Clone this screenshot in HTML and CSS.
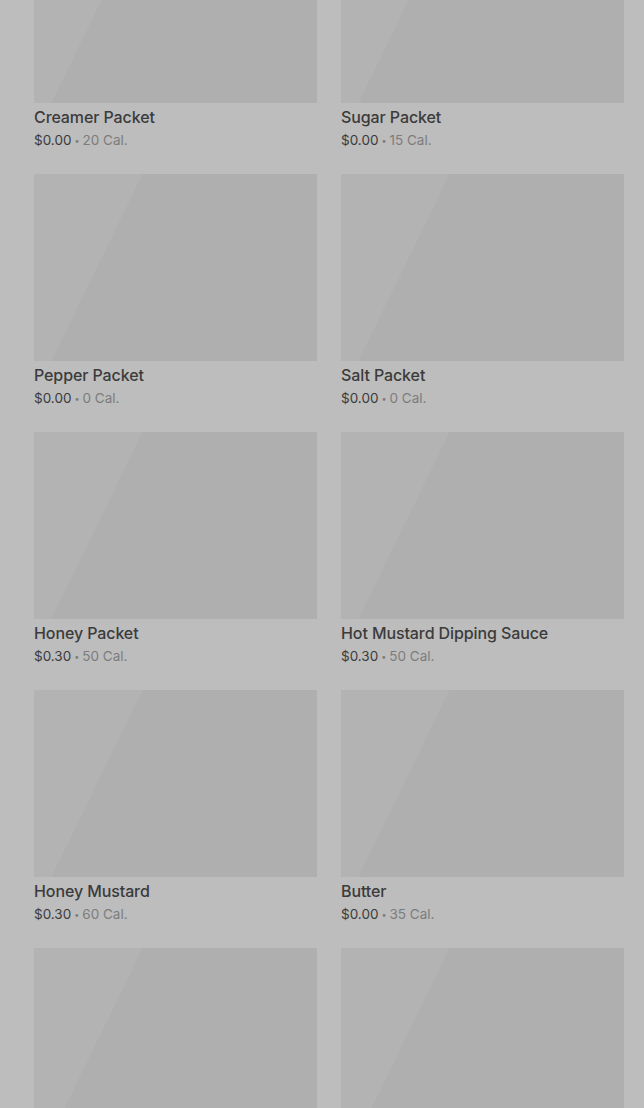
FILE: index.html
```html
<!DOCTYPE html>
<html lang="en">
<head>
  <meta charset="UTF-8" />
  <title>Extras</title>
  <link rel="stylesheet" href="styles.css">
</head>
<body>
  <div class="menu-grid">
    <div class="item">
      <div class="thumb"></div>
      <div class="name">Creamer Packet</div>
      <div class="meta"><span class="price">$0.00</span><span class="dot">•</span>20 Cal.</div>
    </div>
    <div class="item">
      <div class="thumb"></div>
      <div class="name">Sugar Packet</div>
      <div class="meta"><span class="price">$0.00</span><span class="dot">•</span>15 Cal.</div>
    </div>
    <div class="item">
      <div class="thumb"></div>
      <div class="name">Pepper Packet</div>
      <div class="meta"><span class="price">$0.00</span><span class="dot">•</span>0 Cal.</div>
    </div>
    <div class="item">
      <div class="thumb"></div>
      <div class="name">Salt Packet</div>
      <div class="meta"><span class="price">$0.00</span><span class="dot">•</span>0 Cal.</div>
    </div>
    <div class="item">
      <div class="thumb"></div>
      <div class="name">Honey Packet</div>
      <div class="meta"><span class="price">$0.30</span><span class="dot">•</span>50 Cal.</div>
    </div>
    <div class="item">
      <div class="thumb"></div>
      <div class="name">Hot Mustard Dipping Sauce</div>
      <div class="meta"><span class="price">$0.30</span><span class="dot">•</span>50 Cal.</div>
    </div>
    <div class="item">
      <div class="thumb"></div>
      <div class="name">Honey Mustard</div>
      <div class="meta"><span class="price">$0.30</span><span class="dot">•</span>60 Cal.</div>
    </div>
    <div class="item">
      <div class="thumb"></div>
      <div class="name">Butter</div>
      <div class="meta"><span class="price">$0.00</span><span class="dot">•</span>35 Cal.</div>
    </div>
    <div class="item">
      <div class="thumb"></div>
    </div>
    <div class="item">
      <div class="thumb"></div>
    </div>
  </div>
</body>
</html>
```

FILE: styles.css
```css
html, body {
  margin: 0;
  height: 100%;
  overflow: hidden;
}
body {
  font-family: Inter, "Noto Sans", Arial, sans-serif;
  background-color: #bdbdbd;
  color: #3b3b3b;
}
.menu-grid {
  display: grid;
  grid-template-columns: 283px 283px;
  column-gap: 24px;
  padding-left: 34px;
  margin-top: -84px;
}
.item {
  height: 258px;
}
.thumb {
  height: 187px;
  background: linear-gradient(116deg, #b3b3b3 0%, #b3b3b3 29%, #afafaf 29%, #afafaf 100%);
}
.name {
  margin-top: 4px;
  font-size: 16px;
  font-weight: 500;
  line-height: 20px;
  letter-spacing: -0.1px;
}
.meta {
  margin-top: 4px;
  font-size: 13.5px;
  line-height: 18px;
  color: #7c7c7c;
}
.price {
  color: #3b3b3b;
}
.dot {
  font-size: 9px;
  margin: 0 3px;
  vertical-align: 1px;
}
```
